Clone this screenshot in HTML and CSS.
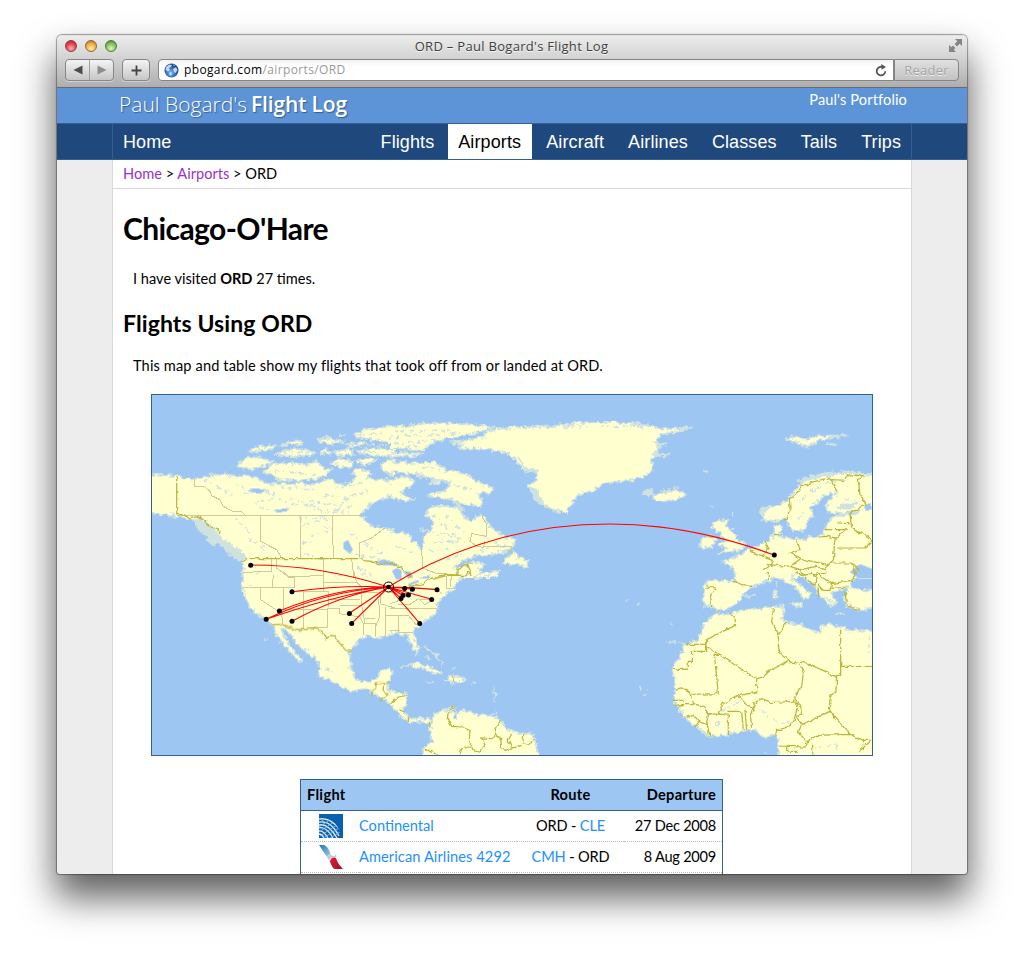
FILE: index.html
```html
<!DOCTYPE html>
<html lang="en">
<head>
<meta charset="utf-8">
<title>ORD – Paul Bogard's Flight Log</title>
<link rel="stylesheet" href="styles.css">
</head>
<body>
<div class="window">
  <header class="chrome">
    <div class="titlebar">
      <div class="lights"><i class="light red"></i><i class="light amber"></i><i class="light green"></i></div>
      <div class="window-title">ORD – Paul Bogard's Flight Log</div>
      <svg class="expand" width="15" height="15" viewBox="0 0 15 15"><path d="M7 1h7v7l-2.300-2.300-2.700 2.700-2.400-2.400 2.700-2.700zM1 7l2.300 2.300 1.700-1.700 2.400 2.400-1.700 1.700L8 14H1z" fill="#858585"/></svg>
    </div>
    <div class="toolbar">
      <div class="btn nav-btns">
        <span><svg width="10" height="10" viewBox="0 0 10 10"><path d="M9.500 .5v9L.5 5z" fill="#4c4c4c"/></svg></span>
        <span><svg width="10" height="10" viewBox="0 0 10 10"><path d="M.5 .5v9L9.500 5z" fill="#8d8d8d"/></svg></span>
      </div>
      <div class="btn add"><svg width="11" height="11" viewBox="0 0 11 11"><path d="M5.500 .5v10M.5 5.500h10" stroke="#444" stroke-width="1.800"/></svg></div>
      <div class="address">
        <svg width="15" height="15" viewBox="0 0 15 15"><defs><radialGradient id="globe" cx=".45" cy=".65"><stop offset="0" stop-color="#76bdf5"/><stop offset="1" stop-color="#174a9c"/></radialGradient></defs><circle cx="7.500" cy="7.500" r="7" fill="url(#globe)"/><path d="M2 4l3-2.500 3 .5-1 2-2 1 1 2-2 1.500L1.500 7zM9 6l3-2 1.500 3-2 3-1.500-1zM6 9l2 1-1 3-2-2zM9 1.500l2 .8-1 1z" fill="#dcebf8" opacity=".85"/></svg>
        <span class="url"><b>pbogard.com</b>/airports/ORD</span>
        <svg width="12" height="13" viewBox="0 0 12 13"><path d="M10.300 7.200a4.300 4.300 0 1 1-2.700-4.100" fill="none" stroke="#555" stroke-width="1.800"/><path d="M6.300 0l4.700 3-4.500 2.800z" fill="#555"/></svg>
      </div>
      <div class="reader">Reader</div>
    </div>
  </header>
  <div class="page">
    <div class="masthead"><div class="inner">
      <div class="brand"><span class="thin">Paul Bogard's</span><span class="bold">Flight Log</span></div>
      <a class="portfolio">Paul's Portfolio</a>
    </div></div>
    <div class="menu"><nav class="inner">
      <a class="home">Home</a><a>Flights</a><a class="current">Airports</a><a>Aircraft</a><a>Airlines</a><a>Classes</a><a>Tails</a><a>Trips</a>
    </nav></div>
    <main class="inner">
      <div class="crumbs"><a>Home</a> &gt; <a>Airports</a> &gt; ORD</div>
      <h1>Chicago-O'Hare</h1>
      <p class="visits">I have visited <b>ORD</b> 27 times.</p>
      <h2>Flights Using ORD</h2>
      <p class="intro">This map and table show my flights that took off from or landed at ORD.</p>
      <svg class="map" width="722" height="362" viewBox="1 1 722 362">
        <defs>
          <filter id="rough" x="0" y="0" width="1" height="1"><feTurbulence type="fractalNoise" baseFrequency=".22" numOctaves="3" seed="4"/><feDisplacementMap in="SourceGraphic" scale="7" xChannelSelector="R" yChannelSelector="G"/></filter>
          <filter id="wavy" x="0" y="0" width="1" height="1"><feTurbulence type="fractalNoise" baseFrequency=".2" numOctaves="2" seed="9"/><feDisplacementMap in="SourceGraphic" scale="4" xChannelSelector="R" yChannelSelector="G"/></filter>
        </defs>
        <rect width="725" height="365" fill="#9ec6f3"/>
        <g filter="url(#rough)">
        <g class="land">
          <svg x="0" y="0" width="245" height="185" viewBox="0 0 735 555">
            <path d="M-20 243L40 246 80 248 110 256 135 258 150 252 190 246 235 243 262 252 290 246 320 255 345 268 370 272 400 270 430 275 450 268 480 278 500 270 520 262 545 258 560 272 590 275 610 262 620 250 606 240 620 225 650 232 665 243 650 255 680 262 700 258 715 262 730 290 720 310 690 320 660 335 640 355 632 370 650 385 670 400 700 405 735 410 760 415V575H280L282 540 280 520 278 505 265 490 250 490 240 475 235 465 222 455 206 428 170 390 150 378 130 382 105 375 85 370 40 364 5 362-20 362z"/>
            <path d="M262 220L280 195 320 190 350 200 372 205 345 215 310 230 270 225zM340 240L360 215 400 208 470 215 500 205 520 225 545 230 530 245 500 258 440 262 380 258 365 245zM295 175L310 165 350 158 380 157 365 168 320 176zM375 185L400 175 440 165 500 180 480 188 400 190zM390 158L430 142 460 145 450 155zM500 138L530 133 580 145 560 152 520 150zM610 125L640 110 680 105 720 100 760 95V145L700 145 650 137 620 133zM510 172L530 165 540 185 515 183zM550 178L600 168 610 185 565 188zM620 172L680 165 760 170V190L690 190 630 182zM540 210L570 195 610 205 600 225 560 220zM620 205L650 195 680 200 640 218zM692 215L720 200 760 200V250L720 245 700 235zM585 155L640 145 650 155 600 160zM565 126l20 1"/>
            <path class="shoal" d="M130 383L160 382 205 425 215 440 240 455 275 480 290 497 270 500 240 485 225 470 205 445 190 455 195 460 170 440 180 430 150 415z"/>
          </svg>
          <svg x="240" y="0" width="245" height="185" viewBox="0 0 735 555">
            <path d="M-20 100L60 97 120 90 200 92 290 98 310 105 260 120 200 132 150 138 120 155 100 170 50 170-20 165zM-20 180L40 178 100 184 60 190-20 190zM-20 208L40 205 60 212 130 208 180 235 240 245 250 260 310 285 300 298 262 300 280 325 270 342 230 335 180 318 110 310 120 302 165 295 180 270 140 260 90 245 40 240-20 235zM-10 270L20 255 50 250 75 265 55 285 30 300 70 318 50 324 20 320-10 305zM120 270L150 265 148 275z"/>
            <path d="M115 345L150 338 190 342 215 350 220 375 245 385 270 362 290 385 310 410 330 425 375 440 370 460 350 475 290 487 260 487 215 505 190 525 205 530 245 505 285 515 265 530 280 545 310 534 328 532 320 545 270 575H-20V415L60 422 65 440 85 455 95 470 103 460 100 430 130 405 125 380 105 370zM340 510L370 475 378 490 410 500 415 520 375 513 350 512zM88 410l16 0"/>
            <path d="M180 148L230 145 270 130 310 110 380 102 480 100 570 90 650 85 700 90 760 90V265L690 265 650 268 600 295 565 305 545 330 530 360 490 352 450 330 430 300 412 280 440 265 440 240 405 235 380 205 350 178 280 168 200 165 220 155z"/>
            <path class="shoal" d="M385 195L410 225 438 232 440 240 410 235zM415 280L440 325 470 345 455 325 438 290zM185 318L216 345 222 370 210 350z"/>
          </svg>
          <svg x="480" y="0" width="245" height="185" viewBox="0 0 735 555">
            <path d="M-20 90L50 97 100 108 185 104 130 118 90 125 80 145 90 150 80 185 65 200 68 235 40 250-20 265zM65 305L90 302 140 290 168 302 150 318 100 325 70 315zM465 135L500 130 530 140 560 128 650 127 600 135 560 145 530 163 500 148zM585 150l35 4z"/>
            <path d="M760 248L700 245 670 238 620 240 570 252 520 266 490 300 470 325 430 340 397 352 393 370 405 385 440 382 470 375 475 395 492 415 525 410 530 385 550 370 540 345 580 310 600 300 622 300 600 320 588 340 595 358 640 362 690 352 670 365 615 370 595 385 590 400 580 425 555 430 510 440 470 435 447 430 460 402 435 397 430 430 412 445 380 460 345 475 320 490 278 505 300 515 315 545 320 575H760zM252 387L275 382 298 380 285 397 310 415 320 440 345 450 340 468 310 475 268 483 290 465 268 455 285 440 262 415 245 400zM207 462L218 435 240 427 258 437 252 458 225 466z"/>
            <path class="shoal" d="M38 298L60 290 68 303 55 308zM500 265L560 244 640 234 700 242 640 240 560 252zM392 348L425 338 410 350 397 375zM620 345L640 335 680 335 650 345zM240 340h10M310 360v8M220 235h14M75 148L110 155 85 160zM75 178L115 185 75 190z"/>
          </svg>
          <svg x="0" y="179" width="245" height="185" viewBox="0 0 735 555">
            <path d="M281-20L278 20 276 45 285 70 295 100 320 125 350 140 365 160 380 190 400 215 420 240 440 262 457 272 455 262 430 235 410 205 392 172 400 165 420 185 440 215 470 240 500 265 510 290 505 310 550 330 600 357 650 352 690 375 730 398 760 410V358L715 355 715 330 728 305 720 290 690 297 680 320 650 330 620 322 602 290 598 240 620 210 650 192 690 200 700 190 760 185V-20z"/>
            <path class="shoal" d="M348 201h5"/>
          </svg>
          <svg x="240" y="179" width="245" height="185" viewBox="0 0 735 555">
            <path d="M-20-20H245L235 8 210 22 200 30 200 46 165 65 150 85 140 100 145 110 130 130 92 155 70 178 75 205 88 235 80 245 62 215 52 185 30 188 0 180-20 185zM258 22L262 10 300-10 330-10 290 12zM35 285L70 272 110 280 155 303 130 306 90 286 60 280zM160 328L175 325 178 312 210 315 230 327 190 332zM-20 358L50 365 50 400 37 415 62 440 90 440 120 440 118 456 90 448 60 453 30 430 0 395-20 385z"/>
            <path d="M88 575L105 525 125 510 120 460 135 425 175 412 195 405 182 420 205 425 215 414 250 425 300 430 330 445 362 478 430 488 440 530 455 575z"/>
            <path class="shoal" d="M105 228l20 8 15 18 18 20M110 250l6 12M110 330h22M245 330h18M155 278l5 3M185 286l8 3M308 345l8 25-2 20M706 85h12M300 435l20-15M-5 295l10 5"/>
          </svg>
          <svg x="480" y="179" width="245" height="185" viewBox="0 0 735 555">
            <path d="M320-20L315 25 230 28 222 45 220 100 250 105 262 115 300 108 330 85 345 60 370 45 410 28 435 15 460 25 500 50 520 80 535 82 543 65 485 18 495 2 515 10 560 50 570 75 600 100 620 90 602 62 650 48 655 60 640 75 650 100 690 115 730 110 760 110V48L690 55 660 45 672 20 690 5 700-20z"/>
            <path d="M265 124L300 127 330 115 400 108 430 105 455 103 465 120 455 140 480 155 520 160 555 180 570 183 575 160 600 155 660 175 760 175V575H447V505L435 490 400 495 375 475 340 475 290 488 240 495 180 450 150 415 132 390 135 345 135 320 127 295 150 250 165 220 200 205 215 180 220 155 255 127zM431 62L441 58 443 80 432 80zM480 96L515 93 508 106zM438 33l5 12"/>
            <path class="shoal" d="M615 124h30M345 75l35-4M112 210h25M150 210l15 8M120 155h10M20 95h8M28 345l8 3M50 352v6M38 369h12M585 75l20 15M590 95l20 8M405 545h8"/>
          </svg>
        </g>
        <g class="lakes">
          <path d="M54 84l22-2 5 4M86 92l40 10M54 87l15 8 14 7M94 101l20-4 5 2M105 109l20-3 22 6M116 90l22 5 28 1M110 115l18 2 12-2M149 125l22-1 20-9M151 133l26-7M162 114l15-12 24 4M153 150l8-2M160 143l19-4M175 133l10 5M98 146l17 10M86 125l14 16M190 112l16-11 16-4M185 95l29-5M160 108l40 6M168 118l32 2M140 105l30 12M120 72l22-3M126 78l40 4M133 60l32-1M172 60l28-4 26 4M171 46l25 1M206 42l30-2M205 50l32 3M186 71l15-3M245 38l60-1M240 44l70-4M244 50l48-2M241 56l28-3M258 71l44 8M268 84l54 12M282 122l10 6 7 8M276 137l20 4 16 4M296 122l18 18M283 150l30-3M279 158l22-2M290 130l25 20M286 143l22 10M332 142l30 16M330 158l18-6M246 153l18 7M282 171l32-10M450 33l64 1M375 35l62-2M312 47l24-3"/>
          <path d="M650 107l20-13M660 98l12-5M690 112l18-2M695 106l12 3M648 126l8-7M676 90l16-1M510 98l18-4M70 150l10 8M155 160l20 8M200 140l20 12M215 152l20 10M205 162l24 3"/>
          <path d="M101 191v2M105 180l4-2M182 181l12 4M208 175l14 6M211 180l8 3M125 222v6M175 276l8 3M151 236v5M571 318l20-10M612 318l16 12h12M663 356l18-5 10 5M567 329v4M719 244v16"/>
        </g>
        </g>
        <path class="water" d="M98 98l6-3 12 2-6 4zM125 117l14-2-2 3-10 2zM193 150l5-3 5 10-3 4-6-5zM224 170l9-4 10 3 6 3-8 1-8-1zM242 178l5-3 4 2v10l-5-1zM253 178l7 0 3 6-5 1zM258 191l10-4 1 2-10 4zM270 185l10-3-1 3zM303 325l3-5v6zM714 113l6-3 2 6-6 2zM700 179l10-8 15 6v8l-16 1z"/>
        <g class="states">
          <svg x="0" y="0" width="245" height="185" viewBox="0 0 735 555"><path d="M133 256V280L165 282 180 295 185 308 210 320 220 340 250 356 275 356 285 367M80 367H632M332 367V445L380 470 395 495M451 367V495M547 367V430L552 495M704 405L665 435 628 450V495M365 495V535L280 538M378 497L380 525 415 552 522 547M521 497V555M605 497L612 555"/></svg>
          <svg x="240" y="0" width="245" height="185" viewBox="0 0 735 555"><path d="M275 362L278 375 288 390 290 430 245 422 240 445 260 460 280 463 285 445M280 461H365L360 485M95 468L98 525 135 540 195 545M230 512H250"/></svg>
          <svg x="0" y="179" width="245" height="185" viewBox="0 0 735 555"><path d="M278 46H432V15H415L400 0M332 46V83L395 125 398 155M367 46L370 10M401 46V115L396 130M461 55V170M430 58H535V105M401 112H532V165H470M521 0V30H620L635 45V100H570M521 30V58M535 82H630M532 110H568V125L630 135 640 155V190M635 100L645 155H675V195M645 138H675M685 80L690 130 675 170M640 60H690V95L735 108M705 105V195M705 130H735M612 0L620 30"/></svg>
          <svg x="240" y="179" width="245" height="185" viewBox="0 0 735 555"><path d="M0 108H140M0 130H55L80 160M25 130V180H70M0 175H30M28 60V85L0 95M60 50V75M60 97L85 80 105 98 125 85M60 97H25M75 50H140L155 65M88 83L130 80M168 12V50H200M185 8L180 45M0 60L30 65"/></svg>
        </g>
        <g class="nations" filter="url(#wavy)">
          <svg x="0" y="0" width="245" height="185" viewBox="0 0 735 555"><path d="M80 250V362L98 362 120 378 140 370 155 375 175 395 210 415 208 425M275 507L290 497H632L640 503 665 505 695 515 710 508 735 518"/></svg>
          <svg x="240" y="0" width="245" height="185" viewBox="0 0 735 555"><path d="M0 512L20 517 40 530 60 543V555M135 552L155 547 200 545 205 530 225 517 235 518 243 545"/></svg>
          <svg x="480" y="0" width="245" height="185" viewBox="0 0 735 555"><path d="M458 380L472 375 480 345 478 318 500 300 515 282 540 270 580 258 605 262 620 298M580 258L640 262 655 245 685 248 700 252 685 260 690 305 708 332 660 362 665 405 680 415 715 430 725 445 705 465 620 465M622 390L660 392M582 410H650M565 432L590 430 620 435 650 405M615 435L610 500 595 515 520 500 480 480 490 475 510 470 500 440M400 532L425 515 430 500 360 475M405 445L415 465 400 490M432 425H455M410 515L480 520 515 495M480 520L510 530 560 520 585 530 600 510 665 510 690 535M665 510L675 545M510 530L520 545 560 545 590 540M230 432H255"/></svg>
          <svg x="0" y="179" width="245" height="185" viewBox="0 0 735 555"><path d="M362 157H395L435 172H470L495 168 515 180 530 200 540 190 555 192 570 215 585 233 605 240M665 373V360L680 350 675 335H700V360M700 358L715 367 690 385M702 335L720 328M725 395L735 380"/></svg>
          <svg x="240" y="179" width="245" height="185" viewBox="0 0 735 555"><path d="M58 44L75 40 100 35 110 25 135 20 170 10H225L235-3 243 8M5 395L25 375 52 370M25 413L45 420M55 430V450M118 445L120 462M188 313V330M193 405L175 420 172 440 185 463 215 465 240 475 238 500 245 535 270 540 285 520 275 498 305 500 320 490 315 470 330 448M105 532L140 547M210 547L215 530 240 525M320 490L332 500 335 530 345 535 395 520M365 485L355 505 365 525M402 480L398 515 420 520 430 498"/></svg>
          <svg x="480" y="179" width="245" height="185" viewBox="0 0 735 555"><path d="M310 28L335 38 367 40M225 45L255 48 242 70 245 105M415 0L415 25M497 0L515 10 545 5 558 15 555 40 525 15M560 0L575 15 605 35 665 25 680 0M605 35L600 55H580L565 40 565 75M600 50L650 45M645 60L650 100 690 115M265 115V122M300 125L315 140 317 160 285 175 230 203 228 218 M172 217H227M227 203V238H188L187 268H172V292H128M228 222L370 315 380 320 400 315 415 300 475 265 450 245 445 220 445 185 425 150 430 110M468 150L448 185M475 268L508 275 520 268 618 313M632 170V310H620L618 360 600 375 598 415M632 283H735M250 250H268M253 248L265 365 188 367M135 352L155 348 185 367 190 395 225 405 235 430 230 450 240 495M132 385H165M145 398H190M132 400L165 398M170 437L190 430 210 450 230 458M195 465L210 445M235 425L270 427 265 420 280 395 325 370 350 400 372 405M265 425L295 430V487M295 418H335L340 475M345 415L350 475M365 470L362 435 375 400 370 395 395 383 420 392 490 388 505 400 490 450 465 468 440 475 435 492M380 320V360L330 370M508 275L520 300 515 345 495 370 495 385 512 400 515 430 500 432 515 458 600 418 660 487 560 490 530 510 505 480 515 458M600 415L615 440M548 515V548M445 522L525 525 530 508M470 525V538H500M660 487L700 505H735M700 505L700 535M725 505L685 540"/></svg>
        </g>
        <g class="routes"><path d="M238.500 194Q340 131 460 131 540 131 624 162M238.500 194Q170 172 100.700 172M238.500 194Q190 192 142 198.700M238.500 194Q185 195 129.300 218M238.500 194Q175 198 116 226.300M238.500 194Q183 203 116 226.300M238.500 194Q190 202 142 228.300M238.500 194L199.300 220.300M238.500 194L201.700 230.300M238.500 194L254.700 195.300 262.300 196M238.500 194Q262 194 287 196.700M238.500 194L281.700 206.300M238.500 194L269.700 230.300M238.500 194L258.300 202M238.500 194L253 202.300M238.500 194L251 205.300"/></g>
        <g class="dots"><circle cx="238.500" cy="194" r="2.300"/><circle cx="624.300" cy="162" r="2.500"/><circle cx="100.700" cy="172.300" r="2.500"/><circle cx="142" cy="198.700" r="2.500"/><circle cx="129.400" cy="218" r="2.500"/><circle cx="116.200" cy="226.300" r="2.500"/><circle cx="142" cy="228.300" r="2.500"/><circle cx="199.400" cy="220.400" r="2.500"/><circle cx="201.700" cy="230.400" r="2.500"/><circle cx="254.700" cy="195.500" r="2.500"/><circle cx="262.400" cy="196.200" r="2.500"/><circle cx="287" cy="196.700" r="2.500"/><circle cx="281.700" cy="206.400" r="2.500"/><circle cx="269.700" cy="230.400" r="2.500"/><circle cx="258.400" cy="202" r="2.500"/><circle cx="253" cy="202.400" r="2.500"/><circle cx="251" cy="205.400" r="2.500"/></g>
        <circle cx="238.500" cy="194" r="5" fill="none" stroke="#000"/>
        <rect x="1.500" y="1.500" width="721" height="361" fill="none" stroke="#365f91"/>
      </svg>
      <table>
        <colgroup><col class="c-logo"><col class="c-flight"><col class="c-route"><col></colgroup>
        <thead><tr><th colspan="2">Flight</th><th class="route">Route</th><th class="date">Departure</th></tr></thead>
        <tbody>
          <tr><td class="logo"><svg width="24" height="24" viewBox="0 0 24 24"><defs><clipPath id="sphere"><circle cx="3" cy="22" r="18"/></clipPath></defs><path fill="#0a5fae" d="M0 0h24v24H0z"/><g fill="none" stroke="#dcecf8" stroke-width="1.300" clip-path="url(#sphere)"><path d="M0 5Q12 3 21 16M0 8Q12 6 20 22M0 11Q9 9 18 24M0 14Q7 12 14 24M0 17Q4 16 9 24M0 20Q3 20 5 24"/><path d="M0 9L7 4M0 13L12 5M0 18L15 8M1 22L18 11M6 23L20 14M11 24L21 18" stroke="#8fbfe4" stroke-width=".9"/></g></svg></td><td><a>Continental</a></td><td class="route">ORD - <a>CLE</a></td><td class="date">27 Dec 2008</td></tr>
          <tr><td class="logo"><svg width="24" height="24" viewBox="0 0 24 24"><defs><linearGradient id="tailBlue" x2="1" y2="1"><stop stop-color="#1b78b8"/><stop offset="1" stop-color="#a8cfe5"/></linearGradient><linearGradient id="tailRed" x2="1" y2="1"><stop stop-color="#d9213a"/><stop offset="1" stop-color="#a80d29"/></linearGradient></defs><path d="M0 0h5c3 1 5 4 7 10-2-1-3 0-4 2z" fill="url(#tailBlue)"/><path d="M8 12c1-3 4-2 6-1 2 .5 3-.5 2-2 2 1 2 4-1 4-4 0-5 0-4 4z" fill="#c4c9cf"/><path d="M11 17c0-4 3-5 6-4 1 4 4 8 7 11h-8c-2 0-3-3-5-7z" fill="url(#tailRed)"/></svg></td><td><a class="long">American Airlines 4292</a></td><td class="route"><a>CMH</a> - ORD</td><td class="date">8 Aug 2009</td></tr>
          <tr><td></td><td></td><td></td><td></td></tr>
        </tbody>
      </table>
    </main>
  </div>
</div>
</body>
</html>
```
FILE: styles.css
```css
* { box-sizing: border-box; }
body { margin: 0; padding: 35px 57px 0; height: 953px; background: #fff; overflow: hidden; font: 14.6px Lato, sans-serif; color: #000; }
.window { width: 910px; height: 839px; border-radius: 5px 5px 3px 3px; overflow: hidden; box-shadow: 0 0 1px 1px rgba(0,0,0,.35), 0 22px 36px 2px rgba(0,0,0,.62); background: #ededed; }
.chrome { height: 53px; background: linear-gradient(#ececec, #d2d2d2 45%, #aeaeae); border-bottom: 1px solid #6a6a6a; border-top: 1px solid #e0e0e0; font-family: "Open Sans", sans-serif; }
.titlebar { display: flex; align-items: center; height: 21px; padding: 0 4px 0 8px; }
.lights { display: flex; gap: 8px; width: 60px; margin-top: -1px; }
.light { width: 12px; height: 12px; border-radius: 50%; border: 1px solid #666; }
.red { background: radial-gradient(circle at 50% 75%, #ffb0b0, #e6424c 55%, #9c2029); border-color: #8a3c40; }
.amber { background: radial-gradient(circle at 50% 75%, #ffedaa, #efad41 55%, #9d6518); border-color: #8d6a36; }
.green { background: radial-gradient(circle at 50% 75%, #dcf8b8, #7fc25a 55%, #3d7a2c); border-color: #54793f; }
.window-title { flex: 1; text-align: center; padding: 0 50px 2px 0; font-size: 13px; letter-spacing: .3px; color: #404040; text-shadow: 0 1px 0 #f4f4f4; }
.expand { margin-top: -2px; }
.toolbar { display: flex; align-items: center; height: 26px; padding: 0 8px; }
.btn { height: 22px; border: 1px solid #868686; border-radius: 4px; background: linear-gradient(#f4f4f4, #c6c6c6); display: flex; align-items: center; justify-content: center; box-shadow: 0 1px 0 rgba(255,255,255,.4); }
.nav-btns { width: 49px; }
.nav-btns span { flex: 1; height: 20px; display: flex; align-items: center; justify-content: center; }
.nav-btns span + span { border-left: 1px solid #a0a0a0; }
.add { width: 28px; margin: 0 8px; }
.address { flex: 1; height: 22px; border: 1px solid #868686; border-radius: 4px 0 0 4px; background: linear-gradient(#f2f2f2, #fff 30%); display: flex; align-items: center; padding: 0 6px 0 5px; }
.url { flex: 1; margin-left: 5px; font-size: 12px; line-height: 16px; letter-spacing: .36px; color: #999; }
.url b { font-weight: 400; color: #000; }
.reader { width: 65px; height: 22px; border: 1px solid #868686; border-radius: 0 4px 4px 0; background: linear-gradient(#e0e0e0, #c2c2c2); color: #a4a4a4; text-shadow: 0 1px 0 #eee; font-size: 13px; letter-spacing: .2px; line-height: 20px; text-align: center; }
.inner { width: 800px; margin: 0 auto; }
.masthead { height: 35px; background: #5d93d7; color: #fff; }
.masthead .inner { display: flex; justify-content: space-between; padding: 0 5px 0 7px; }
.brand { display: flex; gap: 4px; font: 300 21px/33px "Open Sans", sans-serif; text-shadow: 1px 1px 1px #365f91; }
.bold { font-weight: 600; letter-spacing: -.15px; }
.portfolio { line-height: 24px; letter-spacing: .12px; }
.menu { height: 37px; background: #1f497d; border-top: 1px solid #365f91; border-bottom: 1px solid #365f91; }
.menu .inner { height: 35px; display: flex; align-items: stretch; gap: 4px; border: solid #365f91; border-width: 0 1px; font: 18px/36px "Liberation Sans", Arial, sans-serif; letter-spacing: .1px; color: #fff; }
.menu a { padding: 0 10px; }
.menu .home { margin-right: auto; }
.menu .current { background: #fff; color: #000; width: 84px; }
main.inner { background: #fff; height: 714px; border: solid #d9d9d9; border-width: 0 1px; overflow: hidden; }
.crumbs { height: 29px; padding-left: 10px; line-height: 28px; border-bottom: 1px solid #d9d9d9; }
.crumbs a { color: #9932cc; }
h1, h2, p { margin: 0; }
h1 { font-size: 30px; line-height: 40px; letter-spacing: -.6px; margin: 19px 0 0 10px; }
p { margin-left: 20px; line-height: 20px; }
.visits { margin-top: 21px; }
h2 { font-size: 23px; line-height: 30px; letter-spacing: .1px; margin: 19px 0 0 10px; }
.intro { margin-top: 18px; letter-spacing: .13px; }
.map { display: block; margin: 18px auto 23px 38px; }
.land { fill: #ffffcf; stroke: #cfe2df; stroke-width: 5; stroke-linejoin: round; }
.shoal { fill: #cfe2df; stroke: #cfe2df; }
.lakes { fill: none; stroke: #cfe2df; stroke-width: 1.7; stroke-dasharray: 4 3 2 5 6 3; }
.water { fill: #9ec6f3; stroke: #cfe2df; shape-rendering: crispEdges; }
.states { fill: none; stroke: #d0cb98; stroke-width: 3; shape-rendering: crispEdges; }
.nations { fill: none; stroke: #b9b53e; stroke-width: 3.7; }
.routes { fill: none; stroke: #f00; stroke-width: 1.1; }
table { width: 423px; margin-left: 187px; border: 1px solid #365f91; border-collapse: separate; border-spacing: 0; table-layout: fixed; }
.c-logo { width: 58px; }
.c-flight { width: 158px; }
.c-route { width: 107px; }
tr { height: 31px; }
th { padding: 0 6px; background: #9ec6f3; border-bottom: 1px solid #365f91; text-align: left; letter-spacing: .3px; line-height: 20px; }
td { padding: 0; border-bottom: 1px dotted #bbb; white-space: nowrap; line-height: 20px; }
td.logo { padding-left: 18px; }
.logo svg { display: block; }
th.route, td.route { text-align: center; }
td.route { letter-spacing: -.15px; }
th.date, td.date { text-align: right; padding-right: 6px; }
td.date { letter-spacing: -.25px; }
td a { color: #1e90ff; }
.long { letter-spacing: .1px; }
```
